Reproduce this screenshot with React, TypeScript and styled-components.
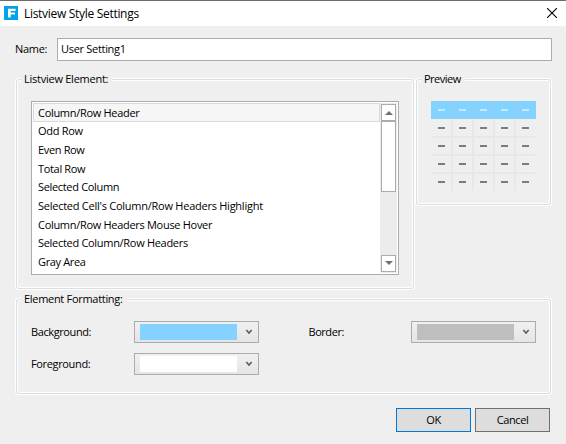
import React from "react";
import styled, { createGlobalStyle } from "styled-components";

const GlobalStyle = createGlobalStyle`
  * { box-sizing: border-box; }
  body { margin: 0; background: #efefef; }
`;

const Dialog = styled.div`
  width: 566px;
  height: 444px;
  overflow: hidden;
  display: flex;
  flex-direction: column;
  background: #efefef;
  color: #000;
  font: 11px/18px "Open Sans", "Noto Sans", sans-serif;
  border-top: 1px solid #6b6b6b;
`;

const TitleBar = styled.header`
  height: 25px;
  flex: none;
  display: flex;
  align-items: center;
  padding: 0 9px 0 4px;
  background: #fff;
  svg { flex: none; display: block; margin-bottom: 1px; }
`;

const Title = styled.h1`
  flex: 1;
  margin: 0 0 0 6px;
  font: 400 12px/18px "Open Sans", sans-serif;
`;

const Label = styled.span<{ $spacing?: number }>`
  white-space: nowrap;
  letter-spacing: ${(p) => p.$spacing ?? -0.3}px;
`;

const NameRow = styled.div`
  display: flex;
  align-items: flex-start;
  height: 23px;
  margin: 12px 14px 0 15px;
  line-height: 17px;
  > span { width: 42px; padding-top: 2px; }
`;

const NameField = styled.div`
  width: 495px;
  height: 23px;
  padding: 1px 3px;
  border: 1px solid #abadb3;
  background: #fff;
`;

const Section = styled.div<{ $top: number }>`
  display: flex;
  align-items: flex-start;
  gap: 2px;
  margin: ${(p) => p.$top}px 0 0 16px;
`;

const Group = styled.section<{ $w: number; $h: number }>`
  width: ${(p) => p.$w}px;
  height: ${(p) => p.$h}px;
  flex: none;
  border: 1px solid #d5dfe5;
  border-radius: 3px;
  box-shadow: 0 0 0 1px #fff, inset 0 0 0 1px #fff;
`;

const Legend = styled.h2`
  width: max-content;
  height: 18px;
  margin: -10px 0 0 4px;
  padding: 0 4px 0 3px;
  background: #efefef;
  font: inherit;
`;

const ListBox = styled.div`
  display: flex;
  justify-content: space-between;
  width: 368px;
  height: 174px;
  margin: 13px 0 0 14px;
  padding: 1px;
  border: 1px solid #abadb3;
  background: #fff;
`;

const List = styled.ul`
  width: 347px;
  margin: 0;
  padding: 0;
  list-style: none;
`;

const Item = styled.li<{ $active?: boolean }>`
  height: 18.6px;
  padding: 0 4px;
  border: 1px solid ${(p) => (p.$active ? "#dadada" : "transparent")};
  background: ${(p) => (p.$active ? "#f6f6f6" : "transparent")};
  line-height: 17px;
  &:nth-child(2) { line-height: 16px; }
`;

const ScrollBar = styled.div`
  display: flex;
  flex-direction: column;
  width: 17px;
  padding: 1px;
  background: #ececec;
`;

const ScrollButton = styled.div`
  height: 17px;
  border: 1px solid #acacac;
  background: #fff;
  svg { display: block; }
`;

const Thumb = styled.div`
  height: 71px;
  margin: 0 0 auto;
  border: 1px solid #acacac;
  background: #fff;
`;

const PreviewGrid = styled.div`
  display: grid;
  grid-template-columns: repeat(5, 21px);
  grid-auto-rows: 18px;
  margin: 13px 0 0 14px;
`;

const Cell = styled.div<{ $row: number; $col: number }>`
  display: grid;
  place-items: center;
  border: 1px solid ${(p) => (p.$row === 0 ? "#90cff4" : "#e8e8e8")};
  background: ${(p) => (p.$row === 0 ? "#84d2ff" : "#efefef")};
  ${(p) => p.$col === 0 && `border-left-color: ${p.$row ? "#efefef" : "#84d2ff"};`}
  ${(p) => p.$col === 4 && `border-right-color: ${p.$row ? "#efefef" : "#84d2ff"};`}
  ${(p) => p.$row === 0 && "border-top-color: #84d2ff; border-bottom-color: #84d2ff;"}
  ${(p) => p.$row === 1 && "border-top-color: #efefef;"}
  ${(p) => p.$row === 4 && "border-bottom-color: #efefef;"}
  &::after {
    content: "";
    width: 7px;
    height: 2px;
    background: ${(p) => (p.$row === 0 ? "#c4e9ff" : "#7c7c7c")};
  }
`;

const Formatting = styled.div`
  display: grid;
  grid-template-columns: 103px 174.5px 102.5px 125px;
  grid-auto-rows: 22px;
  row-gap: 10px;
  margin: 13px 0 0 14px;
  align-items: center;
`;

const Picker = styled.div`
  display: flex;
  align-items: center;
  width: 125px;
  height: 22px;
  padding-left: 5px;
  border: 1px solid #acacac;
  background: linear-gradient(#f0f0f0, #e5e5e5);
`;

const Swatch = styled.span<{ $color: string }>`
  width: 97px;
  height: 16px;
  margin-right: 8px;
  background: ${(p) => p.$color};
`;

const Actions = styled.footer`
  display: flex;
  gap: 4px;
  margin: 14px 0 0 396px;
`;

const Button = styled.button<{ $primary?: boolean }>`
  width: 75px;
  height: 24px;
  padding: 0;
  border: 1px solid ${(p) => (p.$primary ? "#0078d7" : "#707070")};
  background: #ddd;
  color: #000;
  font: inherit;
`;

const items: [string, number][] = [
  ["Column/Row Header", -0.3],
  ["Odd Row", -0.3],
  ["Even Row", -0.35],
  ["Total Row", -0.33],
  ["Selected Column", -0.33],
  ["Selected Cell's Column/Row Headers Highlight", -0.25],
  ["Column/Row Headers Mouse Hover", -0.3],
  ["Selected Column/Row Headers", -0.3],
  ["Gray Area", -0.35],
];

const Arrow = ({ down }: { down?: boolean }) => (
  <ScrollButton>
    <svg width="13" height="15" viewBox="0 0 13 15">
      <path d={down ? "M3 5h8L7 9z" : "M3 10h8L7 6z"} fill="#707070" />
    </svg>
  </ScrollButton>
);

const ColorPicker = ({ color }: { color: string }) => (
  <Picker>
    <Swatch $color={color} />
    <svg width="8" height="6" viewBox="0 0 8 6">
      <path d="M1.3 1 4 4 6.7 1" fill="none" stroke="#606060" strokeWidth="1.7" />
    </svg>
  </Picker>
);

export default function App() {
  return (
    <>
      <GlobalStyle />
      <Dialog>
        <TitleBar>
          <svg width="14" height="14" viewBox="0 0 14 14">
            <path d="M0 0h14v14H0z" fill="#00a2e8" />
            <path d="M4 2.7h7.6v2.2H6.7v1.6H11v2.1H6.7V11.4H4z" fill="#fff" />
          </svg>
          <Title><Label>Listview Style Settings</Label></Title>
          <svg width="10" height="10" viewBox="0 0 10 10">
            <path d="M0 0 10 10M10 0 0 10" stroke="#000" strokeWidth="1.1" />
          </svg>
        </TitleBar>
        <NameRow>
          <Label $spacing={-0.3}>Name:</Label>
          <NameField><Label>User Setting1</Label></NameField>
        </NameRow>
        <Section $top={18}>
          <Group $w={398} $h={210}>
            <Legend><Label $spacing={-0.25}>Listview Element:</Label></Legend>
            <ListBox>
              <List>
                {items.map(([text, spacing], i) => (
                  <Item key={text} $active={i === 0}><Label $spacing={spacing}>{text}</Label></Item>
                ))}
              </List>
              <ScrollBar>
                <Arrow />
                <Thumb />
                <Arrow down />
              </ScrollBar>
            </ListBox>
          </Group>
          <Group $w={135} $h={126}>
            <Legend><Label $spacing={-0.5}>Preview</Label></Legend>
            <PreviewGrid>
              {Array.from({ length: 25 }, (_, i) => (
                <Cell key={i} $row={Math.floor(i / 5)} $col={i % 5} />
              ))}
            </PreviewGrid>
          </Group>
        </Section>
        <Section $top={10}>
          <Group $w={535} $h={95}>
            <Legend><Label $spacing={-0.3}>Element Formatting:</Label></Legend>
            <Formatting>
              <Label $spacing={-0.4}>Background:</Label>
              <ColorPicker color="#84d2ff" />
              <Label $spacing={-0.45}>Border:</Label>
              <ColorPicker color="#bebebe" />
              <Label $spacing={-0.35}>Foreground:</Label>
              <ColorPicker color="#fff" />
            </Formatting>
          </Group>
        </Section>
        <Actions>
          <Button $primary><Label $spacing={-0.4}>OK</Label></Button>
          <Button><Label $spacing={-0.4}>Cancel</Label></Button>
        </Actions>
      </Dialog>
    </>
  );
}
